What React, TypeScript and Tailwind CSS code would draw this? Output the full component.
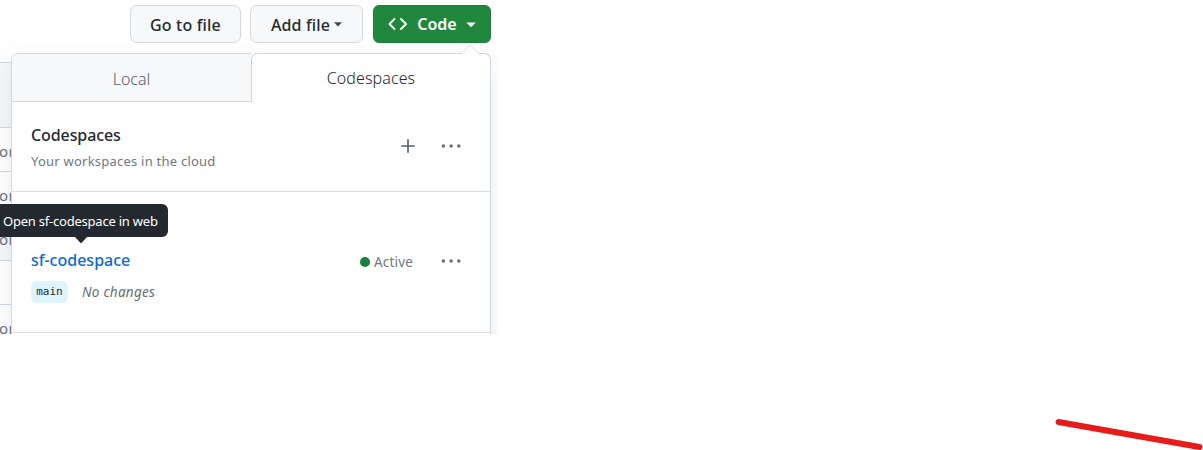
import React from "react";

function Dots() {
  return (
    <svg width="22" height="8" viewBox="0 0 22 8" fill="#656d76">
      <circle cx="3.4" cy="4" r="1.75" />
      <circle cx="11.1" cy="4" r="1.75" />
      <circle cx="18.8" cy="4" r="1.75" />
    </svg>
  );
}

function FileRow({ className, label }: { className: string; label?: string }) {
  return (
    <div className={`flex w-[11px] shrink-0 items-center overflow-hidden border-t border-[#d0d7de] ${className}`}>
      {label && <span className="-ml-px pt-[2px] text-[15px] leading-5 tracking-[0.3px] text-[#656d76]">{label}</span>}
    </div>
  );
}

function Toolbar() {
  return (
    <div className="flex h-[53px] shrink-0 items-start pl-[130px] pt-[5px] text-[16px] font-medium text-[#24292f]">
      <button className="flex h-[38px] w-[111px] items-center justify-center rounded-[7px] border border-[#d5d9de] bg-[#f6f8fa] pt-px">
        <span className="whitespace-nowrap tracking-[0.18px]">Go to file</span>
      </button>
      <button className="ml-[9px] flex h-[38px] w-[113px] items-center justify-center gap-[4px] rounded-[7px] border border-[#d5d9de] bg-[#f6f8fa] pt-px">
        <span className="whitespace-nowrap tracking-[0.15px]">Add file</span>
        <svg width="8" height="5" viewBox="0 0 8 5" className="-mt-px" fill="#42474d">
          <path d="M0 0.3h8L4 4.6z" />
        </svg>
      </button>
      <button className="ml-[10px] flex h-[38px] w-[118px] items-center rounded-[6px] border border-[#1f7f3a] bg-[#1f883d] pl-[14px] text-white">
        <svg width="20" height="16" viewBox="0 0 20 16" fill="none" stroke="white" strokeWidth="1.8" strokeLinecap="round" strokeLinejoin="round">
          <path d="M6.5 3L1.4 8l5.1 5M13 3l5.1 5-5.1 5" />
        </svg>
        <span className="ml-[8px] w-[42px] whitespace-nowrap font-semibold">Code</span>
        <svg width="10" height="6" viewBox="0 0 10 6" className="ml-[8px] mt-[2px]" fill="white">
          <path d="M0.3 0.5h9.4L5 5.3z" />
        </svg>
      </button>
    </div>
  );
}

function Panel() {
  return (
    <div className="relative h-[300px] w-[480px] shrink-0 rounded-t-[7px] border border-[#d0d7de] bg-white shadow-[0_8px_24px_rgba(140,149,159,0.2)]">
      <svg className="absolute -top-[10px] left-[449px]" width="18" height="11" viewBox="0 0 18 11">
        <path d="M0 10L9 1l9 9v1H0z" fill="white" />
        <path d="M0.5 9.5L9 1l8.5 8.5" fill="none" stroke="#dde1e5" />
      </svg>
      <div className="-mt-px flex h-[49px] text-[16px] font-light">
        <div className="mt-px flex w-[239px] items-center justify-center rounded-tl-[6px] border-b border-[#d0d7de] bg-[#f6f8fa] pt-[3px] text-[#57606a]">
          <span>Local</span>
        </div>
        <div className="-mr-px flex flex-1 rounded-tr-[7px] bg-[linear-gradient(90deg,#f6f8fa_20px,transparent_20px)]">
          <div className="flex flex-1 items-center justify-center rounded-t-[7px] border-l border-r border-t border-[#d0d7de] bg-white text-[#24292f]">
            <span className="tracking-[0.1px]">Codespaces</span>
          </div>
        </div>
      </div>
      <div className="flex h-[90px] border-b border-[#d8dee4] pl-[19px]">
        <div className="w-[370px] pt-[21px]">
          <div className="text-[16px] font-medium leading-6 tracking-[-0.1px] text-[#24292f]">Codespaces</div>
          <div className="mt-[4px] text-[13px] leading-5 tracking-[0.23px] text-[#6e7781]">Your workspaces in the cloud</div>
        </div>
        <svg className="mt-[37px]" width="14" height="14" viewBox="0 0 14 14" stroke="#57606a" strokeWidth="1.6" strokeLinecap="round">
          <path d="M7 0.8v12.4M0.8 7h12.4" />
        </svg>
        <div className="ml-[25px] mt-[40px]"><Dots /></div>
      </div>
      <div className="flex h-[141px] border-b border-[#d8dee4] pl-[19px]">
        <div className="w-[329px] pt-[56px]">
          <a className="block text-[16px] font-medium leading-6 text-[#0969da]">sf-codespace</a>
          <div className="mt-[9px] flex items-center">
            <span className="flex h-[22px] w-[37px] items-center justify-center rounded-[6px] bg-[#ddf4ff] pt-px font-['DejaVu_Sans_Mono',monospace] text-[11px] text-[#24292f]">main</span>
            <span className="-mt-px ml-[14px] text-[13.5px] italic leading-5 tracking-[0.27px] text-[#656d76]">No changes</span>
          </div>
        </div>
        <div className="mt-[65px] h-[10px] w-[10px] rounded-full bg-[#1a7f37]" />
        <span className="ml-[4px] mt-[60px] w-[40px] text-[13.5px] leading-5 tracking-[0.2px] text-[#6e7781]">Active</span>
        <div className="ml-[26px] mt-[65px]"><Dots /></div>
      </div>
      <div role="tooltip" className="absolute -left-3 top-[150px] flex h-[33px] w-[168px] items-center rounded-r-[6px] bg-[#24292f] pl-[3px] pt-[2px] text-[13px] text-white">
        <span className="whitespace-nowrap tracking-[-0.22px]">Open sf-codespace in web</span>
        <svg className="absolute left-[74px] top-[32px]" width="14" height="8" viewBox="0 0 14 8" fill="#24292f">
          <path d="M0 0h14L7 7.5z" />
        </svg>
      </div>
    </div>
  );
}

export default function App() {
  return (
    <div className="relative h-[450px] w-full overflow-hidden bg-white font-['Noto_Sans',sans-serif]">
      <div className="flex h-[334px] w-[497px] flex-col overflow-hidden">
        <Toolbar />
        <div className="flex">
          <div className="flex w-[11px] shrink-0 flex-col pt-[9px]">
            <FileRow className="h-[65px] bg-[#f6f8fa]" />
            <FileRow className="h-11" label="or" />
            <FileRow className="h-11" label="or" />
            <FileRow className="h-[45px] bg-[#f6f8fa]" label="or" />
            <FileRow className="h-11" />
            <FileRow className="h-11" label="or" />
          </div>
          <Panel />
        </div>
      </div>
      <svg className="absolute bottom-0 right-0" width="163" height="50" viewBox="0 0 163 50">
        <path d="M18.5 22L159.5 47" stroke="#e81b1b" strokeWidth="6" strokeLinecap="round" />
      </svg>
    </div>
  );
}
